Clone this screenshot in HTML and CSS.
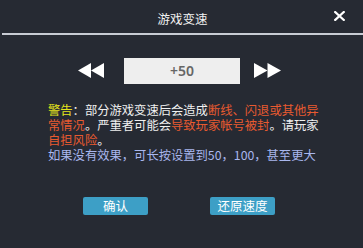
FILE: index.html
```
<!DOCTYPE html>
<html lang="zh-CN">
<head>
<meta charset="utf-8">
<link rel="stylesheet" href="styles.css">
</head>
<body>
<div class="dialog">
  <div class="header">
    <div class="title">游戏变速</div>
    <div class="close">
      <svg width="11" height="10" viewBox="0 0 11 10"><path d="M1.2 1 L9.8 9 M9.8 1 L1.2 9" stroke="#ffffff" stroke-width="2.2" stroke-linecap="square"/></svg>
    </div>
  </div>
  <div class="divider"></div>
  <div class="speed">
    <svg class="rew" width="26" height="15" viewBox="0 0 26 15"><polygon points="13,0 0,7.5 13,15" fill="#fff"/><polygon points="26,0 13,7.5 26,15" fill="#fff"/></svg>
    <div class="value">+50</div>
    <svg class="fwd" width="27" height="15" viewBox="0 0 27 15"><polygon points="0,0 13.5,7.5 0,15" fill="#fff"/><polygon points="13.5,0 27,7.5 13.5,15" fill="#fff"/></svg>
  </div>
  <div class="notice">
    <div class="line"><span class="warn">警告</span>：部分游戏变速后会造成<span class="red">断线、闪退或其他异</span></div>
    <div class="line"><span class="red">常情况</span>。严重者可能会<span class="red">导致玩家帐号被封</span>。请玩家</div>
    <div class="line"><span class="red">自担风险</span>。</div>
    <div class="line blue">如果没有效果，可长按设置到50，100，甚至更大</div>
  </div>
  <div class="buttons">
    <div class="btn">确认</div>
    <div class="btn">还原速度</div>
  </div>
</div>
</body>
</html>
```
FILE: styles.css
```
html, body {
  margin: 0;
  padding: 0;
  background: #262a33;
}
body {
  width: 363px;
  height: 248px;
  overflow: hidden;
  font-family: "Noto Sans CJK SC", "Noto Sans", sans-serif;
  color: #f0f0f0;
}
.dialog {
  width: 363px;
  height: 248px;
  display: flex;
  flex-direction: column;
}
.header {
  height: 33px;
  position: relative;
  display: flex;
  align-items: center;
  justify-content: center;
}
.title {
  font-size: 12.5px;
  color: #f2f2f2;
  line-height: 14px;
  margin-top: 5px;
  margin-left: 2px;
}
.close {
  position: absolute;
  right: 18px;
  top: 11px;
  width: 11px;
  height: 10px;
}
.close svg { display: block; }
.divider {
  height: 1.5px;
  margin-left: 2px;
  background: #c8ccd4;
}
.speed {
  margin-top: 23px;
  display: flex;
  align-items: center;
  padding-left: 78px;
  height: 26px;
}
.rew { display: block; margin-right: 20px; }
.fwd { display: block; margin-left: 14px; }
.value {
  width: 116px;
  height: 26px;
  background: #eeeeee;
  color: #666666;
  font-size: 14px;
  font-weight: 600;
  line-height: 26px;
  text-align: center;
  font-family: "Noto Sans", "Noto Sans CJK SC", sans-serif;
}
.notice {
  margin-top: 19px;
  padding-left: 48px;
  font-size: 12.3px;
  line-height: 15px;
  white-space: nowrap;
}
.line { height: 15px; }
.warn { color: #e4e41c; }
.red { color: #e85a30; }
.blue { color: #a9b7ee; }
.buttons {
  margin-top: 34px;
  display: flex;
  padding-left: 83px;
  gap: 62px;
}
.btn {
  width: 65px;
  height: 18px;
  background: #3d9fc6;
  border-radius: 2px;
  color: #ffffff;
  font-size: 12.5px;
  line-height: 18px;
  text-align: center;
}
```
